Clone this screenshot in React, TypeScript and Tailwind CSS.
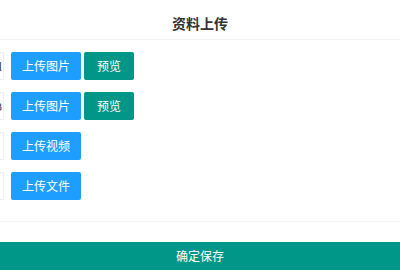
const rows = [
  { value: 'avatar_original', label: '上传图片', preview: true },
  { value: 'max size 2MB', label: '上传图片', preview: true },
  { value: '', label: '上传视频', preview: false },
  { value: '', label: '上传文件', preview: false },
];

export default function App() {
  return (
    <div className="w-[400px] h-[280px] bg-white overflow-hidden font-['Noto_Sans_CJK_SC',sans-serif] text-[#333]">
      {/* Header */}
      <div className="h-[40px] pt-[7px] flex items-center justify-center border-b border-[#f2f2f2]">
        <span className="text-[14px] font-bold leading-none">资料上传</span>
      </div>

      {/* Upload rows */}
      <div className="pt-[12px] pb-[21px] border-b border-[#f4f4f4] flex flex-col gap-[12px]">
        {rows.map((row, i) => (
          <div key={i} className="flex items-center h-[28px]">
            <div className="w-[80px] -ml-[76px] h-[28px] border border-[#eeeeee] flex items-center justify-end overflow-hidden whitespace-nowrap text-[11px] leading-none pr-[1px]">
              {row.value}
            </div>
            <button className="ml-[7px] w-[70px] h-[28px] rounded-[2px] bg-[#1e9fff] text-white text-[12px] leading-none">
              {row.label}
            </button>
            {row.preview && (
              <button className="ml-[3px] w-[50px] h-[28px] rounded-[2px] bg-[#009688] text-white text-[12px] leading-none">
                预览
              </button>
            )}
          </div>
        ))}
      </div>

      {/* Save bar */}
      <div className="mt-[20px] h-[28px] bg-[#009688] flex items-center justify-center text-white text-[12px] leading-none">
        确定保存
      </div>
    </div>
  );
}
